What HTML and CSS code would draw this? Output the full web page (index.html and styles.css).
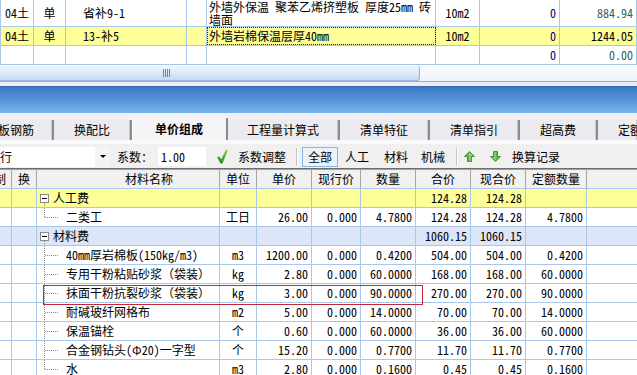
FILE: index.html
```html
<!DOCTYPE html>
<html lang="zh-CN">
<head>
<meta charset="utf-8">
<title>单价组成</title>
<link rel="stylesheet" href="styles.css">
</head>
<body>
<div class="app">
  <div class="top-grid">
    <div class="trow r1">
      <div class="tc">04土</div>
      <div class="tc">单</div>
      <div class="tc code">省补9-1</div>
      <div class="tc"></div>
      <div class="tc desc two">外墙外保温 聚苯乙烯挤塑板 厚度25mm 砖<br>墙面</div>
      <div class="tc">10m2</div>
      <div class="tc num navy">0</div>
      <div class="tc num teal">884.94</div>
    </div>
    <div class="trow sel">
      <div class="tc">04土</div>
      <div class="tc">单</div>
      <div class="tc code">13-补5</div>
      <div class="tc"></div>
      <div class="tc desc focus">外墙岩棉保温层厚40mm</div>
      <div class="tc">10m2</div>
      <div class="tc num navy">0</div>
      <div class="tc num">1244.05</div>
    </div>
    <div class="trow">
      <div class="tc"></div>
      <div class="tc"></div>
      <div class="tc"></div>
      <div class="tc"></div>
      <div class="tc"></div>
      <div class="tc"></div>
      <div class="tc num navy">0</div>
      <div class="tc num teal">0.00</div>
    </div>
  </div>

  <div class="hscroll">
    <div class="thumb"><span class="grip"></span></div>
  </div>
  <div class="band"></div>
  <div class="bluebar"></div>
  <div class="band band2"></div>

  <div class="tabs">
    <div class="tab first">板钢筋</div>
    <div class="tab">换配比</div>
    <div class="tab active">单价组成</div>
    <div class="tab">工程量计算式</div>
    <div class="tab">清单特征</div>
    <div class="tab">清单指引</div>
    <div class="tab">超高费</div>
    <div class="tab last">定额</div>
  </div>

  <div class="toolbar">
    <div class="combo"><span class="combo-text">行</span><span class="combo-btn"><svg width="6" height="4" viewBox="0 0 6 4"><path d="M0 0H6L3 3Z" fill="#000"/></svg></span></div>
    <span class="lbl coef">系数：</span>
    <span class="input">1.00</span>
    <svg class="check" width="11" height="15" viewBox="0 0 11 15"><defs><linearGradient id="gc" x1="0" y1="0" x2="0" y2="1"><stop offset="0" stop-color="#7fd35a"/><stop offset="1" stop-color="#1f8a1f"/></linearGradient></defs><path d="M0 8.5L2.2 7.2L4.3 10.2L9 0.5L10.8 1.5L5.4 14.5H3.6Z" fill="url(#gc)"/></svg>
    <span class="lbl adj">系数调整</span>
    <span class="sep"></span>
    <span class="btn-all">全部</span>
    <span class="lbl t1">人工</span>
    <span class="lbl t2">材料</span>
    <span class="lbl t3">机械</span>
    <span class="sep sep2"></span>
    <svg class="arr up" width="11" height="11" viewBox="0 0 11 11"><path d="M5.5 0.5L10.5 5.5H7.5V10.5H3.5V5.5H0.5Z" fill="#5fb94a" stroke="#2e7d2e" stroke-width="0.8"/><path d="M5.5 1.6L8.6 4.8H6.6V9.6H5.5Z" fill="#a7e08e"/></svg>
    <svg class="arr down" width="11" height="11" viewBox="0 0 11 11"><path d="M3.5 0.5H7.5V5.5H10.5L5.5 10.5L0.5 5.5H3.5Z" fill="#5fb94a" stroke="#2e7d2e" stroke-width="0.8"/><path d="M4.4 1.4H5.6V6.4H2.6L5.5 9.2Z" fill="#a7e08e"/></svg>
    <span class="lbl rec">换算记录</span>
  </div>

  <div class="ghead">
    <div class="hc cut"><span>制</span></div>
    <div class="hc">换</div>
    <div class="hc namehd">材料名称</div>
    <div class="hc">单位</div>
    <div class="hc">单价</div>
    <div class="hc">现行价</div>
    <div class="hc">数量</div>
    <div class="hc">合价</div>
    <div class="hc">现合价</div>
    <div class="hc">定额数量</div>
    <div class="hc"></div>
  </div>

  <div class="gbody">
    <div class="brow yellow">
      <div class="bc"></div><div class="bc"></div>
      <div class="bc name grp"><span class="exp"></span>人工费</div>
      <div class="bc"></div><div class="bc"></div><div class="bc"></div><div class="bc"></div>
      <div class="bc num">124.28</div><div class="bc num">124.28</div><div class="bc"></div><div class="bc"></div>
    </div>
    <div class="brow">
      <div class="bc"></div><div class="bc"></div>
      <div class="bc name child lastc">二类工</div>
      <div class="bc unit">工日</div><div class="bc num">26.00</div><div class="bc num">0.000</div><div class="bc num">4.7800</div>
      <div class="bc num">124.28</div><div class="bc num">124.28</div><div class="bc num">4.7800</div><div class="bc"></div>
    </div>
    <div class="brow blue">
      <div class="bc"></div><div class="bc"></div>
      <div class="bc name grp"><span class="exp"></span>材料费</div>
      <div class="bc"></div><div class="bc"></div><div class="bc"></div><div class="bc"></div>
      <div class="bc num">1060.15</div><div class="bc num">1060.15</div><div class="bc"></div><div class="bc"></div>
    </div>
    <div class="brow">
      <div class="bc"></div><div class="bc"></div>
      <div class="bc name child">40mm厚岩棉板(150kg/m3)</div>
      <div class="bc unit">m3</div><div class="bc num">1200.00</div><div class="bc num">0.000</div><div class="bc num">0.4200</div>
      <div class="bc num">504.00</div><div class="bc num">504.00</div><div class="bc num">0.4200</div><div class="bc"></div>
    </div>
    <div class="brow">
      <div class="bc"></div><div class="bc"></div>
      <div class="bc name child">专用干粉粘贴砂浆（袋装）</div>
      <div class="bc unit">kg</div><div class="bc num">2.80</div><div class="bc num">0.000</div><div class="bc num">60.0000</div>
      <div class="bc num">168.00</div><div class="bc num">168.00</div><div class="bc num">60.0000</div><div class="bc"></div>
    </div>
    <div class="brow">
      <div class="bc"></div><div class="bc"></div>
      <div class="bc name child">抹面干粉抗裂砂浆（袋装）</div>
      <div class="bc unit">kg</div><div class="bc num">3.00</div><div class="bc num">0.000</div><div class="bc num">90.0000</div>
      <div class="bc num">270.00</div><div class="bc num">270.00</div><div class="bc num">90.0000</div><div class="bc"></div>
    </div>
    <div class="brow">
      <div class="bc"></div><div class="bc"></div>
      <div class="bc name child">耐碱玻纤网格布</div>
      <div class="bc unit">m2</div><div class="bc num">5.00</div><div class="bc num">0.000</div><div class="bc num">14.0000</div>
      <div class="bc num">70.00</div><div class="bc num">70.00</div><div class="bc num">14.0000</div><div class="bc"></div>
    </div>
    <div class="brow">
      <div class="bc"></div><div class="bc"></div>
      <div class="bc name child">保温锚栓</div>
      <div class="bc unit">个</div><div class="bc num">0.60</div><div class="bc num">0.000</div><div class="bc num">60.0000</div>
      <div class="bc num">36.00</div><div class="bc num">36.00</div><div class="bc num">60.0000</div><div class="bc"></div>
    </div>
    <div class="brow">
      <div class="bc"></div><div class="bc"></div>
      <div class="bc name child">合金钢钻头(Φ20)一字型</div>
      <div class="bc unit">个</div><div class="bc num">15.20</div><div class="bc num">0.000</div><div class="bc num">0.7700</div>
      <div class="bc num">11.70</div><div class="bc num">11.70</div><div class="bc num">0.7700</div><div class="bc"></div>
    </div>
    <div class="brow">
      <div class="bc"></div><div class="bc"></div>
      <div class="bc name child lastc">水</div>
      <div class="bc unit">m3</div><div class="bc num">2.80</div><div class="bc num">0.000</div><div class="bc num">0.1600</div>
      <div class="bc num">0.45</div><div class="bc num">0.45</div><div class="bc num">0.1600</div><div class="bc"></div>
    </div>
    <div class="redbox"></div>
  </div>
</div>
</body>
</html>
```

FILE: styles.css
```css
* { box-sizing: border-box; margin: 0; padding: 0; }
html, body { width: 637px; height: 375px; overflow: hidden; background: #fff; }
body {
  font-family: "Noto Sans Mono CJK SC", "Liberation Mono", "Noto Sans CJK SC", monospace;
  font-size: 12px;
  line-height: 1;
  color: #000;
}
.app { display: flex; flex-direction: column; width: 637px; }

/* top grid */
.trow {
  display: grid;
  grid-template-columns: 34px 32px 121px 20px 229px 44px 80px 77px;
  height: 19px;
  border-bottom: 1px solid #a9c7e6;
}
.trow.r1 { height: 27px; }
.trow.sel { background: #ffff99; }
.tc {
  border-right: 1px solid #a9c7e6;
  display: flex; align-items: center; justify-content: center;
  white-space: nowrap; overflow: hidden;
}
.tc:first-child { border-left: 1px solid #a9c7e6; }
.tc.code { justify-content: flex-start; padding-left: 17px; }
.tc.desc { justify-content: flex-start; padding-left: 2px; }
.tc.desc.two { display: block; white-space: normal; line-height: 13px; padding-top: 0; overflow: visible; }
.tc.focus { outline: 1px dotted #222; outline-offset: -1px; }
.tc.num { justify-content: flex-end; padding-right: 3px; }
.navy { color: #00007a; }
.teal { color: #2a5f66; }

/* horizontal scrollbar / splitter */
.hscroll {
  display: flex; height: 17px;
  background: linear-gradient(#fbfcfe, #eef3fa);
  border-bottom: 1px solid #a8acb2;
}
.thumb {
  width: 420px; height: 16px;
  background: linear-gradient(#f4f8fe, #c7daf2);
  border: 1px solid #9cb3d2; border-left: 0; border-top: 0;
  border-radius: 0 3px 3px 0;
  display: flex; align-items: center; padding-left: 163px;
}
.grip {
  width: 7px; height: 8px;
  background: repeating-linear-gradient(to right, #6f84a3 0 1px, transparent 1px 2px);
}
.band { height: 4px; background: #eeebf1; }
.band2 { height: 5px; background: #f2f0f5; }
.bluebar {
  height: 27px;
  background: linear-gradient(#2f66b3 0, #3f7cc8 2px, #5290d6 45%, #78b3ec 100%);
}

/* tabs */
.tabs {
  display: grid;
  grid-template-columns: 54px 78px 96px 112px 90px 90px 78px 1fr;
  height: 22px;
  background: #f2f0f5;
}
.tab {
  display: flex; align-items: center; justify-content: center;
  background: #ecebef;
  border-right: 2px solid #8c8c8c;
  box-shadow: inset -1px 0 0 #c8c8c8;
  white-space: nowrap; overflow: hidden;
  margin-top: 2px;
}
.tab.first { justify-content: flex-end; padding-right: 18px; }
.tab.last { justify-content: flex-start; padding-left: 20px; border-right: 0; }
.tab.active { background: #f5f5f7; font-weight: bold; margin-top: 0; box-shadow: inset 1px 0 0 #fff; }

/* toolbar */
.toolbar {
  display: flex; align-items: center;
  height: 28px; padding-top: 5px;
  background: linear-gradient(#fafafb 0, #fafafb 4px, #f0f0f0 4px);
}
.combo { display: flex; width: 110px; height: 20px; background: #fff; }
.combo-text { width: 95px; display: flex; align-items: center; }
.combo-btn { width: 15px; display: flex; align-items: center; justify-content: center; background: #f4f4f4; }
.lbl { white-space: nowrap; }
.coef { margin-left: 7px; }
.input { margin-left: 5px; width: 48px; height: 19px; background: #fff; display: flex; align-items: center; padding-left: 3px; }
.check { margin-left: 11px; }
.adj { margin-left: 10px; }
.sep { margin-left: 10px; width: 2px; height: 18px; border-left: 1px solid #c4c4c4; border-right: 1px solid #fff; }
.btn-all {
  margin-left: 4px; width: 36px; height: 20px;
  display: flex; align-items: center; justify-content: center;
  border: 1px solid #84b7e8; background: #eaf3fc;
}
.t1 { margin-left: 7px; }
.t2 { margin-left: 15px; }
.t3 { margin-left: 13px; }
.sep2 { margin-left: 11px; }
.arr.up { margin-left: 6px; }
.arr.down { margin-left: 15px; }
.rec { margin-left: 11px; }

/* lower grid */
.ghead, .brow {
  display: grid;
  grid-template-columns: 12px 25px 183px 37px 55px 49px 55px 55px 55px 61px 50px;
}
.ghead {
  height: 21px;
  border-top: 1px solid #6e6e6e;
  box-shadow: inset 0 1px 0 #a0a0a0;
  background: #f1f1f1;
  border-bottom: 1px solid #a9c7e6;
}
.hc {
  display: flex; align-items: center; justify-content: center;
  border-right: 1px solid #a6a6a6;
  white-space: nowrap; overflow: hidden;
  padding-top: 1px;
}
.hc.cut { justify-content: flex-end; padding-right: 5px; }
.hc.namehd { justify-content: flex-start; padding-left: 88px; }
.hc:last-child { border-right: 0; }

.gbody { position: relative; }
.brow { height: 19px; border-bottom: 1px solid #a9c7e6; }
.brow.yellow { background: #ffff99; }
.brow.blue { background: #dde6f9; }
.bc {
  display: flex; align-items: center;
  border-right: 1px solid #a9c7e6;
  white-space: nowrap; overflow: hidden;
}
.bc:last-child { border-right: 0; }
.bc.num { justify-content: flex-end; padding-right: 3px; }
.bc.unit { justify-content: center; }
.bc.name { padding-left: 29px; }
.bc.grp {
  padding-left: 3px;
  background: repeating-linear-gradient(to bottom, #8a8a8a 0 1px, transparent 1px 2px) 7px 14px / 1px 5px no-repeat;
}
.exp {
  width: 9px; height: 9px; margin-right: 4px;
  border: 1px solid #8a8a8a; background: #fff;
  display: inline-flex; align-items: center; justify-content: center;
}
.exp::before { content: ""; width: 5px; height: 1px; background: #000; }
.bc.child {
  background:
    repeating-linear-gradient(to bottom, #8a8a8a 0 1px, transparent 1px 2px) 7px 0 / 1px 100% no-repeat,
    repeating-linear-gradient(to right, #8a8a8a 0 1px, transparent 1px 2px) 8px 9px / 13px 1px no-repeat;
}
.bc.child.lastc {
  background:
    repeating-linear-gradient(to bottom, #8a8a8a 0 1px, transparent 1px 2px) 7px 0 / 1px 10px no-repeat,
    repeating-linear-gradient(to right, #8a8a8a 0 1px, transparent 1px 2px) 8px 9px / 13px 1px no-repeat;
}
.redbox {
  position: absolute;
  left: 43px; top: 96px; width: 380px; height: 20px;
  border: 1px solid #c4283c;
  pointer-events: none;
}
```
